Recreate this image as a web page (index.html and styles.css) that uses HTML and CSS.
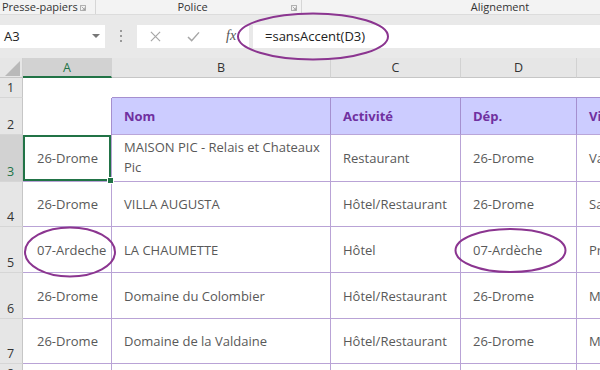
FILE: index.html
```html
<!DOCTYPE html>
<html lang="fr">
<head>
    <meta charset="UTF-8">
    <title>sansAccent - Excel</title>
    <link rel="stylesheet" href="styles.css">
</head>
<body>
    <div class="ribbon">
        <div class="group g-clip"><span>Presse-papiers</span><svg class="launch" viewBox="0 0 7 7"><path d="M0.5 0.5h6v6h-6z M2 2l3.5 3.5 M5.5 3v2.5h-2.5" fill="none" stroke="#8a8a8a" stroke-width="0.8"/></svg></div>
        <div class="group g-font"><span>Police</span><svg class="launch" viewBox="0 0 7 7"><path d="M0.5 0.5h6v6h-6z M2 2l3.5 3.5 M5.5 3v2.5h-2.5" fill="none" stroke="#8a8a8a" stroke-width="0.8"/></svg></div>
        <div class="group g-align"><span>Alignement</span></div>
    </div>

    <div class="fbar">
        <div class="namebox"><span>A3</span><span class="caret"></span></div>
        <div class="grip"><i></i><i></i><i></i></div>
        <div class="fx-btns">
            <svg class="btn-x" viewBox="0 0 12 12"><path d="M1 1l10 10M11 1L1 11" stroke="#a6a6a6" stroke-width="1.3"/></svg>
            <svg class="btn-ok" viewBox="0 0 14 12"><path d="M1 6.5l4 4L13 1.5" fill="none" stroke="#a6a6a6" stroke-width="1.6"/></svg>
            <span class="fx">fx</span>
        </div>
        <div class="formula">=sansAccent(D3)</div>
    </div>

    <div class="sheet-wrap">
    <div class="sheet">
        <!-- column headers -->
        <div class="corner"><svg viewBox="0 0 22 20"><path d="M20 3V18H5z" fill="#b9b9b9"/></svg></div>
        <div class="ch sel">A</div>
        <div class="ch">B</div>
        <div class="ch">C</div>
        <div class="ch">D</div>
        <div class="ch">E</div>

        <!-- row 1 -->
        <div class="rh">1</div>
        <div class="blank"></div>
        <div class="blank top"></div>
        <div class="blank top"></div>
        <div class="blank top"></div>
        <div class="blank top"></div>

        <!-- row 2 -->
        <div class="rh">2</div>
        <div class="blank edge"></div>
        <div class="hd">Nom</div>
        <div class="hd">Activité</div>
        <div class="hd">Dép.</div>
        <div class="hd">Ville</div>

        <!-- row 3 -->
        <div class="rh sel">3</div>
        <div class="c ca active">26-Drome</div>
        <div class="c wrap">MAISON PIC - Relais et Chateaux<br>Pic</div>
        <div class="c">Restaurant</div>
        <div class="c">26-Drome</div>
        <div class="c">Valence</div>

        <!-- row 4 -->
        <div class="rh">4</div>
        <div class="c ca">26-Drome</div>
        <div class="c">VILLA AUGUSTA</div>
        <div class="c">Hôtel/Restaurant</div>
        <div class="c">26-Drome</div>
        <div class="c">Saint-Paul</div>

        <!-- row 5 -->
        <div class="rh">5</div>
        <div class="c ca">07-Ardeche</div>
        <div class="c">LA CHAUMETTE</div>
        <div class="c">Hôtel</div>
        <div class="c">07-Ardèche</div>
        <div class="c">Privas</div>

        <!-- row 6 -->
        <div class="rh">6</div>
        <div class="c ca">26-Drome</div>
        <div class="c">Domaine du Colombier</div>
        <div class="c">Hôtel/Restaurant</div>
        <div class="c">26-Drome</div>
        <div class="c">Malataverne</div>

        <!-- row 7 -->
        <div class="rh">7</div>
        <div class="c ca">26-Drome</div>
        <div class="c">Domaine de la Valdaine</div>
        <div class="c">Hôtel/Restaurant</div>
        <div class="c">26-Drome</div>
        <div class="c">Montboucher</div>

        <!-- row 8 -->
        <div class="rh">8</div>
        <div class="c ca"></div>
        <div class="c"></div>
        <div class="c"></div>
        <div class="c"></div>
        <div class="c"></div>
    </div>
    </div>

    <svg class="marks" viewBox="0 0 600 370">
        <ellipse cx="313" cy="36.5" rx="75" ry="23" />
        <ellipse cx="70" cy="252" rx="45" ry="24.5" />
        <ellipse cx="510.5" cy="250.5" rx="55" ry="21.5" />
    </svg>
</body>
</html>
```

FILE: styles.css
```css
* { margin: 0; padding: 0; box-sizing: border-box; }
body { width: 600px; height: 370px; overflow: hidden; position: relative; font-family: 'Open Sans', 'Noto Sans', sans-serif; background: #fff; color: #333; }

/* ribbon group labels */
.ribbon { display: flex; height: 15px; background: #f3f3f3; border-bottom: 1px solid #dcdcdc; overflow: hidden; font-size: 11px; color: #333; }
.group { position: relative; display: flex; align-items: center; justify-content: center; border-right: 1px solid #d6d6d6; flex-shrink: 0; line-height: 14px; }
.g-clip { width: 96px; justify-content: flex-start; padding-left: 2px; }
.g-font { width: 206px; padding-right: 12px; }
.g-align { width: 396px; border-right: none; }
.launch { position: absolute; right: 4px; top: 5px; width: 6px; height: 6px; }
.g-clip .launch { right: 9px; }

/* formula bar */
.fbar { display: flex; align-items: center; height: 43px; background: #e9e9e9; padding-bottom: 1px; }
.namebox { display: flex; align-items: center; justify-content: space-between; width: 105px; height: 23px; background: #fff; padding: 0 5px 0 4px; font-size: 13px; color: #222; }
.caret { width: 0; height: 0; border-left: 4px solid transparent; border-right: 4px solid transparent; border-top: 4px solid #777; }
.grip { display: flex; flex-direction: column; gap: 3px; width: 32px; align-items: center; }
.grip i { width: 2px; height: 2px; background: #9a9a9a; }
.fx-btns { display: flex; align-items: center; width: 112px; height: 23px; background: #fff; padding-left: 13px; }
.btn-x { width: 11px; height: 11px; }
.btn-ok { width: 13px; height: 11px; margin-left: 26px; }
.fx { margin-left: 26px; font-family: 'Liberation Serif', serif; font-style: italic; font-size: 14px; color: #555; }
.formula { flex: 1; height: 23px; margin-left: 4px; background: #fff; padding-left: 12px; font-size: 13px; line-height: 23px; color: #222; }

/* sheet grid (column E runs past the window edge, clipped by the wrapper) */
.sheet-wrap { width: 600px; overflow: hidden; }
.sheet { display: grid; width: 697px; grid-template-columns: 23px 89px 219px 130px 116px 120px; grid-template-rows: 20px 20px 37px 47px 45px 46px 46px 45px 20px; font-size: 13px; }
.corner { background: #e6e6e6; border-right: 1px solid #cfcfcf; border-bottom: 1px solid #c6c6c6; }
.corner svg { display: block; width: 22px; height: 20px; }
.ch { display: flex; align-items: center; justify-content: center; background: #e6e6e6; border-right: 1px solid #d2d2d2; border-bottom: 1px solid #c6c6c6; color: #333; font-size: 12.5px; }
.ch.sel { background: #d2d2d2; color: #217346; border-bottom: 2px solid #217346; }
.rh { display: flex; align-items: flex-end; justify-content: center; padding: 0 1px 1px 0; background: #e6e6e6; border-right: 1px solid #c6c6c6; border-bottom: 1px solid #d6d6d6; color: #333; font-size: 12.5px; }
.rh.sel { background: #d2d2d2; color: #217346; }

.blank { background: #fff; }
.blank.top { border-bottom: 1px solid #a58fcf; }
.blank.edge { border-right: 1px solid #a58fcf; }

.hd { display: flex; align-items: center; padding-left: 12px; background: #ccccff; border-right: 1px solid #a58fcf; border-bottom: 1px solid #b9a6d9; color: #7030a0; font-weight: 700; white-space: nowrap; overflow: hidden; }

.c { display: flex; align-items: center; padding-left: 12px; background: #fff; border-right: 1px solid #b9a3d6; border-bottom: 1px solid #b9a3d6; color: #595959; white-space: nowrap; overflow: hidden; }
.c.ca { padding-left: 14px; }
.c.wrap { white-space: normal; line-height: 20px; padding-bottom: 2px; }
.c.active { position: relative; overflow: visible; box-shadow: inset 0 0 0 2px #217346; }
.c.active::after { content: ""; position: absolute; right: -3px; bottom: -3px; width: 5px; height: 5px; background: #217346; border: 1px solid #fff; }

/* annotation circles */
.marks { position: absolute; left: 0; top: 0; width: 600px; height: 370px; pointer-events: none; }
.marks ellipse { fill: none; stroke: #8b3590; stroke-width: 2; }
```
